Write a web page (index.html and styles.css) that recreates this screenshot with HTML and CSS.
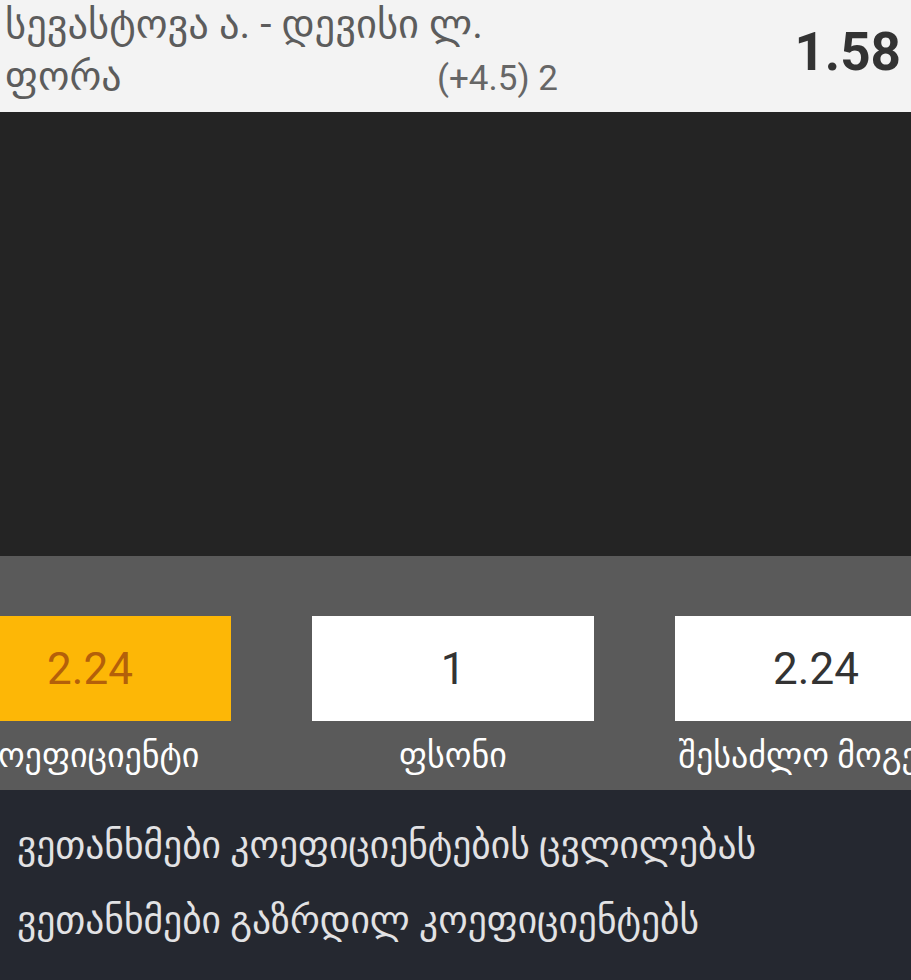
FILE: index.html
```html
<!DOCTYPE html>
<html lang="ka">
<head>
<meta charset="utf-8">
<title>ფსონი</title>
<link rel="stylesheet" href="styles.css">
</head>
<body>
<header class="event">
  <div class="event-info">
    <div class="teams">სევასტოვა ა. - დევისი ლ.</div>
    <div class="market">
      <span class="market-name">ფორა</span>
      <span class="outcome">(+4.5) 2</span>
    </div>
  </div>
  <div class="odd">1.58</div>
</header>

<section class="stage"></section>

<section class="stake-panel">
  <div class="stake-row">
    <div class="stake-col">
      <div class="stake-box stake-box--active">2.24</div>
      <div class="stake-label">კოეფიციენტი</div>
    </div>
    <div class="stake-col">
      <div class="stake-box">1</div>
      <div class="stake-label">ფსონი</div>
    </div>
    <div class="stake-col">
      <div class="stake-box">2.24</div>
      <div class="stake-label">შესაძლო მოგება</div>
    </div>
  </div>
</section>

<section class="options">
  <div class="option">ვეთანხმები კოეფიციენტების ცვლილებას</div>
  <div class="option">ვეთანხმები გაზრდილ კოეფიციენტებს</div>
</section>
</body>
</html>
```

FILE: styles.css
```css
html, body {
  margin: 0;
  padding: 0;
}

body {
  width: 911px;
  height: 980px;
  overflow: hidden;
  background: #252830;
  font-family: Roboto, "DejaVu Sans", sans-serif;
}

/* event header */
.event {
  height: 112px;
  background: #f3f3f3;
  display: flex;
  align-items: center;
  justify-content: space-between;
  padding: 0 10px 0 5px;
  box-sizing: border-box;
}

.event-info {
  display: flex;
  flex-direction: column;
  gap: 5px;
  align-self: flex-start;
}

.teams,
.market {
  line-height: 48px;
  color: #5c5c5c;
}

.teams {
  font-size: 40.5px;
}

.market {
  display: flex;
  align-items: baseline;
}

.market-name {
  width: 432px;
  font-size: 40px;
}

.outcome {
  font-size: 35px;
  color: #666;
}

.odd {
  font-size: 53px;
  font-weight: 700;
  color: #333;
  padding-bottom: 8px;
}

/* dark stage */
.stage {
  height: 444px;
  background: #242424;
}

/* stake panel */
.stake-panel {
  height: 234px;
  background: #5a5a5a;
  overflow: hidden;
  padding-top: 60px;
  box-sizing: border-box;
}

.stake-row {
  display: grid;
  grid-template-columns: repeat(3, 282px);
  column-gap: 81px;
  margin-left: -51px;
}

.stake-col {
  display: flex;
  flex-direction: column;
  align-items: center;
}

.stake-box {
  width: 100%;
  height: 105px;
  background: #fff;
  color: #333;
  font-size: 44px;
  display: flex;
  align-items: center;
  justify-content: center;
}

.stake-box--active {
  background: #fdb706;
  color: #b4600a;
}

.stake-label {
  height: 69px;
  line-height: 69px;
  color: #fff;
  font-size: 34px;
  white-space: nowrap;
}

/* options list */
.options {
  padding: 30px 17px 0;
  display: flex;
  flex-direction: column;
}

.option {
  height: 75px;
  line-height: 50px;
  color: #e2e2e4;
  font-size: 37.5px;
}
```
